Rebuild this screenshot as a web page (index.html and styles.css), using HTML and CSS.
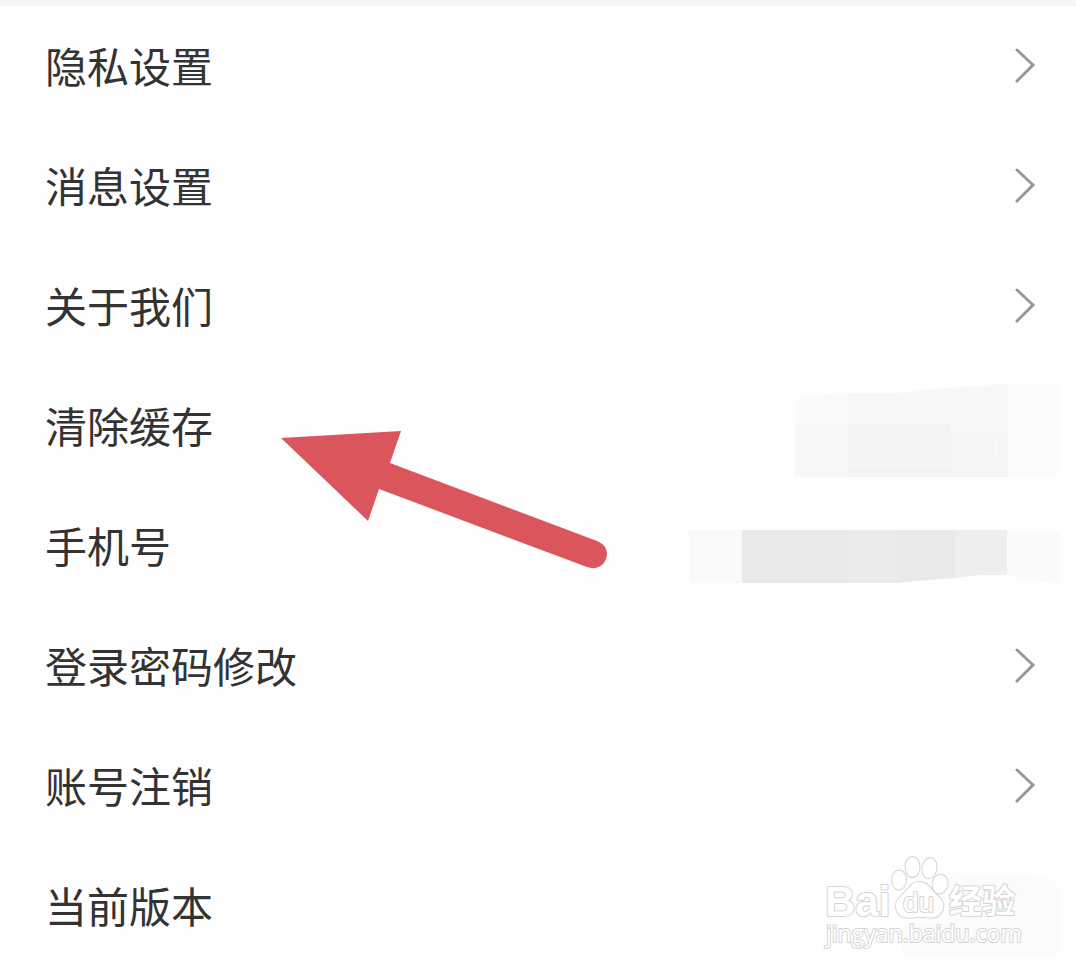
FILE: index.html
```html
<!DOCTYPE html>
<html lang="zh-CN">
<head>
<meta charset="utf-8">
<meta name="viewport" content="width=device-width, initial-scale=1">
<title>设置</title>
<link rel="stylesheet" href="styles.css">
</head>
<body>
<main class="settings">
  <ul class="list">
    <li><a class="row" href="#privacy"><span>隐私设置</span><svg class="chevron" viewBox="0 0 22 36" aria-hidden="true"><path d="M3 3 19 18 3 34"/></svg></a></li>
    <li><a class="row" href="#messages"><span>消息设置</span><svg class="chevron" viewBox="0 0 22 36" aria-hidden="true"><path d="M3 3 19 18 3 34"/></svg></a></li>
    <li><a class="row" href="#about"><span>关于我们</span><svg class="chevron" viewBox="0 0 22 36" aria-hidden="true"><path d="M3 3 19 18 3 34"/></svg></a></li>
    <li><a class="row" href="#cache"><span>清除缓存</span></a></li>
    <li><a class="row" href="#phone"><span>手机号</span></a></li>
    <li><a class="row" href="#password"><span>登录密码修改</span><svg class="chevron" viewBox="0 0 22 36" aria-hidden="true"><path d="M3 3 19 18 3 34"/></svg></a></li>
    <li><a class="row" href="#account"><span>账号注销</span><svg class="chevron" viewBox="0 0 22 36" aria-hidden="true"><path d="M3 3 19 18 3 34"/></svg></a></li>
    <li><a class="row" href="#version"><span>当前版本</span></a></li>
  </ul>

  <svg class="overlay masks" viewBox="660 370 416 240" aria-hidden="true">
    <path fill="#fcfcfc" d="M1008 384h52v93h-52z"/>
    <path fill="#fafafa" d="M796 402q0-6 8-7l44-2v32h-53z"/>
    <path fill="#f7f7f7" d="M795 425h53v52h-53z"/>
    <path fill="#f7f7f7" d="M848 393h50l48-5 62-4v42H848z"/>
    <path fill="#f8f8f8" d="M950 388l58-4v47h-58z"/>
    <path fill="#f3f3f3" d="M848 425h102v52H848z"/>
    <path fill="#f5f5f5" d="M950 431h58v46h-58z"/>
    <path stroke="#f9f9f9" d="M848 465.500h160M848 473.500h160M996.500 434v28M1001.500 434v28"/>
    <path fill="#f9f9f9" d="M689 530h53v53h-53z"/>
    <path fill="#e9e9e9" d="M742 530h106v53H742z"/>
    <path fill="#ebebeb" d="M848 530h48v53h-48z"/>
    <path fill="#e9e9e9" d="M896 530h59v48l-40 3-19 2z"/>
    <path fill="#eee" d="M955 530h52v45l-28 0-24 3z"/>
    <path fill="#fafafa" d="M1007 532h53v51l-30-2-23-6z"/>
  </svg>

  <svg class="overlay arrow" viewBox="0 0 330 142" aria-hidden="true">
    <path d="M1 8 121 1 110 33 317 111C325 114 329 121 326 129C323 137 315 140 307 137L99 59 88 91Z"/>
  </svg>

  <svg class="overlay watermark" viewBox="810 845 266 127" role="img" aria-label="Baidu 经验 jingyan.baidu.com">
    <path class="patch" d="M948 873l100 5 11 8v70H902v-33h46z"/>
    <g class="outline">
      <text class="brand" x="825" y="916">Bai</text>
      <ellipse cx="899" cy="880" rx="7" ry="9.500"/>
      <ellipse cx="912.500" cy="867" rx="7" ry="10"/>
      <ellipse cx="929.500" cy="868" rx="7" ry="10" transform="rotate(10 929 868)"/>
      <ellipse cx="940" cy="884" rx="7.500" ry="9.500" transform="rotate(10 940 884)"/>
      <path d="M919 882C911 882 909 889 903 894C897 899 894 904 897 911C900 919 908 918 919 917C930 917 938 920 942 911C946 904 941 899 936 894C930 889 928 882 919 882Z"/>
      <text class="du" x="903" y="912">du</text>
      <text class="jingyan" x="949" y="913">经验</text>
      <text class="domain" x="826" y="942">jingyan.baidu.com</text>
    </g>
  </svg>
</main>
</body>
</html>
```
FILE: styles.css
```css
* {
  box-sizing: border-box;
}

body {
  margin: 0;
  background: #fefefe;
  color: #333;
  font-family: "Noto Sans CJK SC", sans-serif;
}

.settings {
  position: relative;
  min-height: 100vh;
  border-top: 6px solid #f6f6f6;
}

.list {
  margin: 0;
  padding: 0;
  list-style: none;
}

.row {
  display: flex;
  align-items: center;
  justify-content: space-between;
  height: 120px;
  padding: 0 40px 2px 45px;
  color: inherit;
  font-size: 42px;
  line-height: 60px;
  text-decoration: none;
}

.chevron {
  width: 22px;
  height: 36px;
  fill: none;
  stroke: #999;
  stroke-width: 3;
  stroke-linecap: round;
}

.overlay {
  position: absolute;
  pointer-events: none;
}

.masks {
  top: 364px;
  right: 0;
  width: 416px;
  height: 240px;
}

.arrow {
  top: 424px;
  left: 280px;
  width: 330px;
  height: 142px;
  fill: #db565c;
}

.watermark {
  top: 839px;
  right: 0;
  width: 266px;
  height: 127px;
}

.patch {
  fill: #fbfbfb;
}

.outline {
  fill: #fff;
  stroke: #d4d4d4;
  stroke-width: 2;
  stroke-linejoin: round;
  paint-order: stroke;
}

.brand {
  font: bold 42px "Liberation Sans", sans-serif;
}

.du {
  font: 28px "Liberation Sans", sans-serif;
}

.jingyan {
  font: bold 33px "Noto Sans CJK SC", sans-serif;
}

.domain {
  font: 23px "Open Sans", sans-serif;
}
```
